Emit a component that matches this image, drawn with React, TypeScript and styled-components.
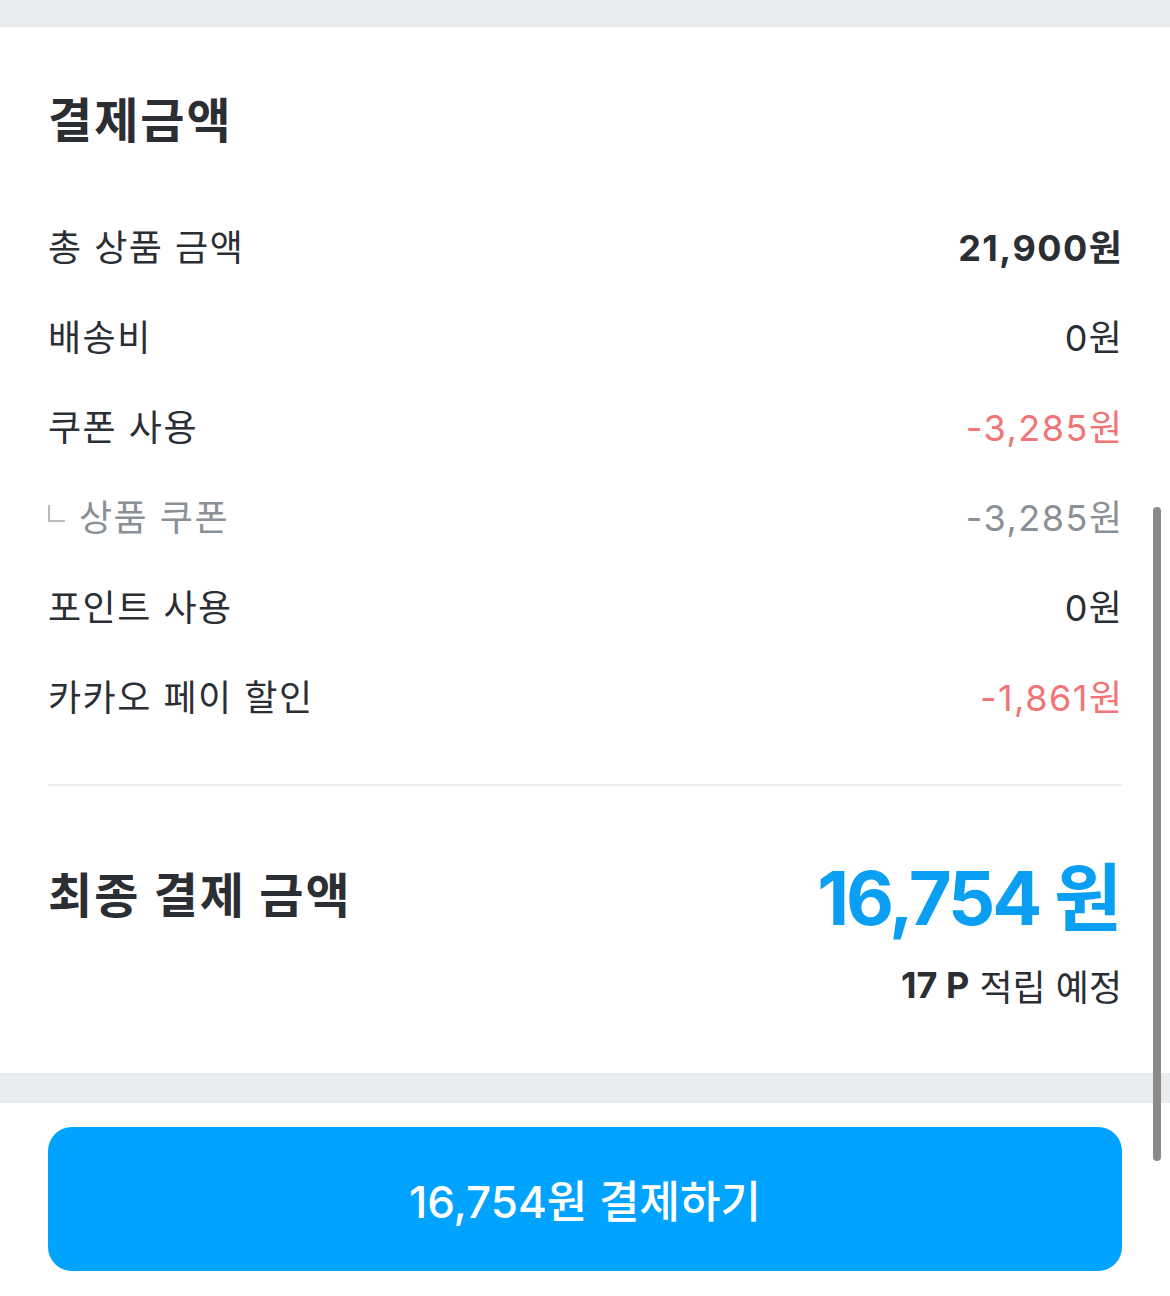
import styled, { createGlobalStyle } from "styled-components";

const GlobalStyle = createGlobalStyle`
  html, body {
    margin: 0;
    padding: 0;
    background: #ffffff;
  }
  body {
    font-family: "Inter", "Noto Sans CJK KR", sans-serif;
    color: #2b2e33;
    -webkit-font-smoothing: antialiased;
  }
  * {
    box-sizing: border-box;
  }
`;

const Page = styled.div`
  position: relative;
  width: 1170px;
  height: 1296px;
  overflow: hidden;
  display: flex;
  flex-direction: column;
`;

const Band = styled.div<{ $h: number }>`
  height: ${(p) => p.$h}px;
  background: #e9ecef;
  flex-shrink: 0;
`;

const Section = styled.section`
  padding: 64px 48px 64px 48px;
  display: flex;
  flex-direction: column;
`;

const Title = styled.h2`
  margin: 0;
  font-size: 48px;
  line-height: 60px;
  font-weight: 700;
  letter-spacing: 2px;
  color: #2b2e33;
`;

const RowList = styled.ul`
  list-style: none;
  margin: 49px 0 0;
  padding: 0;
`;

const Row = styled.li`
  height: 90px;
  display: flex;
  align-items: center;
  justify-content: space-between;
  font-size: 36px;
`;

const Label = styled.span<{ $sub?: boolean }>`
  display: flex;
  align-items: center;
  gap: 14px;
  color: ${(p) => (p.$sub ? "#8b9096" : "#2b2e33")};
  letter-spacing: 1.5px;
`;

const Corner = styled.span`
  width: 17px;
  height: 17px;
  border-left: 2px solid #b9bdc2;
  border-bottom: 2px solid #b9bdc2;
  margin-top: -4px;
`;

type Tone = "strong" | "normal" | "red" | "sub";

const toneColor: Record<Tone, string> = {
  strong: "#2b2e33",
  normal: "#2b2e33",
  red: "#f27475",
  sub: "#8b9096",
};

const Value = styled.span<{ $tone: Tone }>`
  color: ${(p) => toneColor[p.$tone]};
  font-weight: ${(p) => (p.$tone === "strong" ? 700 : 400)};
  letter-spacing: 1.5px;
  margin-right: -1.5px;
`;

const Divider = styled.hr`
  margin: 44px 0 0;
  border: none;
  height: 2px;
  background: #eceef0;
`;

const FinalRow = styled.div`
  margin-top: 51px;
  height: 110px;
  display: flex;
  align-items: center;
  justify-content: space-between;
`;

const FinalLabel = styled.span`
  font-size: 48px;
  font-weight: 700;
  letter-spacing: 2px;
  color: #2b2e33;
`;

const FinalAmount = styled.span`
  font-size: 74px;
  font-weight: 700;
  letter-spacing: -3px;
  margin-right: 3px;
  color: #0b9ff3;
`;

const Points = styled.div`
  margin-top: 14px;
  height: 48px;
  display: flex;
  align-items: center;
  justify-content: flex-end;
  gap: 10px;
  font-size: 36px;
  color: #2b2e33;
  b {
    font-weight: 700;
  }
`;

const Footer = styled.div`
  padding: 24px 48px 25px;
`;

const PayButton = styled.button`
  width: 100%;
  height: 144px;
  border: none;
  border-radius: 24px;
  background: #00a3ff;
  color: #ffffff;
  font-family: "Inter", "Noto Sans CJK KR", sans-serif;
  font-size: 44px;
  font-weight: 500;
  cursor: pointer;
`;

// overlay scroll indicator
const ScrollThumb = styled.div`
  position: absolute;
  left: 1153px;
  top: 507px;
  width: 8px;
  height: 654px;
  border-radius: 4px;
  background: #8a8a8a;
`;

interface IRow {
  label: string;
  value: string;
  tone: Tone;
  sub?: boolean;
}

const rows: IRow[] = [
  { label: "총 상품 금액", value: "21,900원", tone: "strong" },
  { label: "배송비", value: "0원", tone: "normal" },
  { label: "쿠폰 사용", value: "-3,285원", tone: "red" },
  { label: "상품 쿠폰", value: "-3,285원", tone: "sub", sub: true },
  { label: "포인트 사용", value: "0원", tone: "normal" },
  { label: "카카오 페이 할인", value: "-1,861원", tone: "red" },
];

function App() {
  return (
    <Page>
      <GlobalStyle />
      <Band $h={27} />
      <Section>
        <Title>결제금액</Title>
        <RowList>
          {rows.map((row) => (
            <Row key={row.label}>
              <Label $sub={row.sub}>
                {row.sub && <Corner />}
                {row.label}
              </Label>
              <Value $tone={row.tone}>{row.value}</Value>
            </Row>
          ))}
        </RowList>
        <Divider />
        <FinalRow>
          <FinalLabel>최종 결제 금액</FinalLabel>
          <FinalAmount>16,754 원</FinalAmount>
        </FinalRow>
        <Points>
          <b>17 P</b>
          <span>적립 예정</span>
        </Points>
      </Section>
      <Band $h={30} />
      <Footer>
        <PayButton>16,754원 결제하기</PayButton>
      </Footer>
      <ScrollThumb />
    </Page>
  );
}

export default App;
